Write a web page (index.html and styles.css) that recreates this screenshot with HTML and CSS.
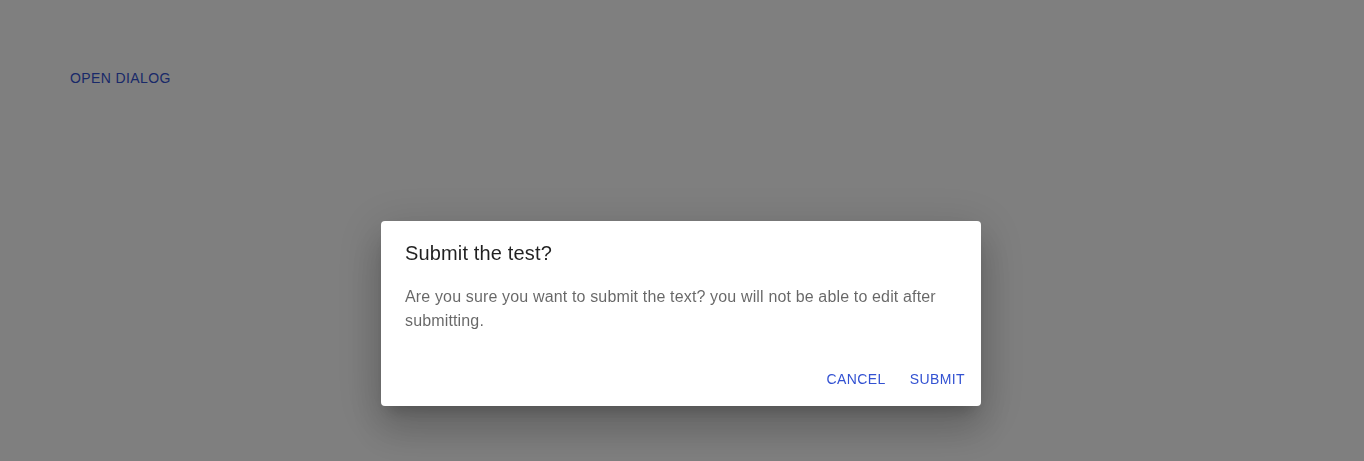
FILE: index.html
```html
<!DOCTYPE html>
<html>
<head>
<meta charset="utf-8">
<link rel="stylesheet" href="styles.css">
</head>
<body>
<div class="page">
  <button class="btn">Open dialog</button>
</div>
<div class="backdrop">
  <div class="dialog">
    <h2 class="dialog-title">Submit the test?</h2>
    <div class="dialog-content">
      <p class="dialog-text">Are you sure you want to submit the text? you will not be able to edit after submitting.</p>
    </div>
    <div class="dialog-actions">
      <button class="btn">Cancel</button>
      <button class="btn">Submit</button>
    </div>
  </div>
</div>
</body>
</html>
```
FILE: styles.css
```css
* { box-sizing: border-box; }
html, body { margin: 0; padding: 0; }
body {
  font-family: "Liberation Sans", Arial, sans-serif;
  background: #fff;
  width: 1364px;
  height: 461px;
  overflow: hidden;
}
.page {
  padding: 60px 62px;
}
.btn {
  font-family: "Liberation Sans", Arial, sans-serif;
  font-size: 14px;
  font-weight: 500;
  letter-spacing: 0.4px;
  text-transform: uppercase;
  color: #3352d2;
  background: transparent;
  border: 0;
  border-radius: 4px;
  padding: 6px 8px;
  min-width: 64px;
  height: 36px;
  line-height: 24px;
  cursor: pointer;
}
.backdrop {
  position: fixed;
  inset: 0;
  background: rgba(0, 0, 0, 0.5);
  display: flex;
  justify-content: center;
  align-items: flex-start;
  padding: 221px 2px 0 0;
}
.dialog {
  width: 600px;
  background: #fff;
  border-radius: 4px;
  box-shadow: 0px 11px 15px -7px rgba(0,0,0,0.2), 0px 24px 38px 3px rgba(0,0,0,0.14), 0px 9px 46px 8px rgba(0,0,0,0.12);
}
.dialog-title {
  margin: 0;
  padding: 16px 24px;
  font-size: 20px;
  font-weight: 500;
  line-height: 32px;
  letter-spacing: 0.15px;
  color: rgba(0, 0, 0, 0.87);
}
.dialog-content {
  padding: 0 24px 20px;
}
.dialog-text {
  margin: 0;
  font-size: 16px;
  line-height: 24px;
  letter-spacing: 0.15px;
  color: rgba(0, 0, 0, 0.6);
}
.dialog-actions {
  display: flex;
  justify-content: flex-end;
  gap: 8px;
  padding: 8px 8px 9px;
}
```
